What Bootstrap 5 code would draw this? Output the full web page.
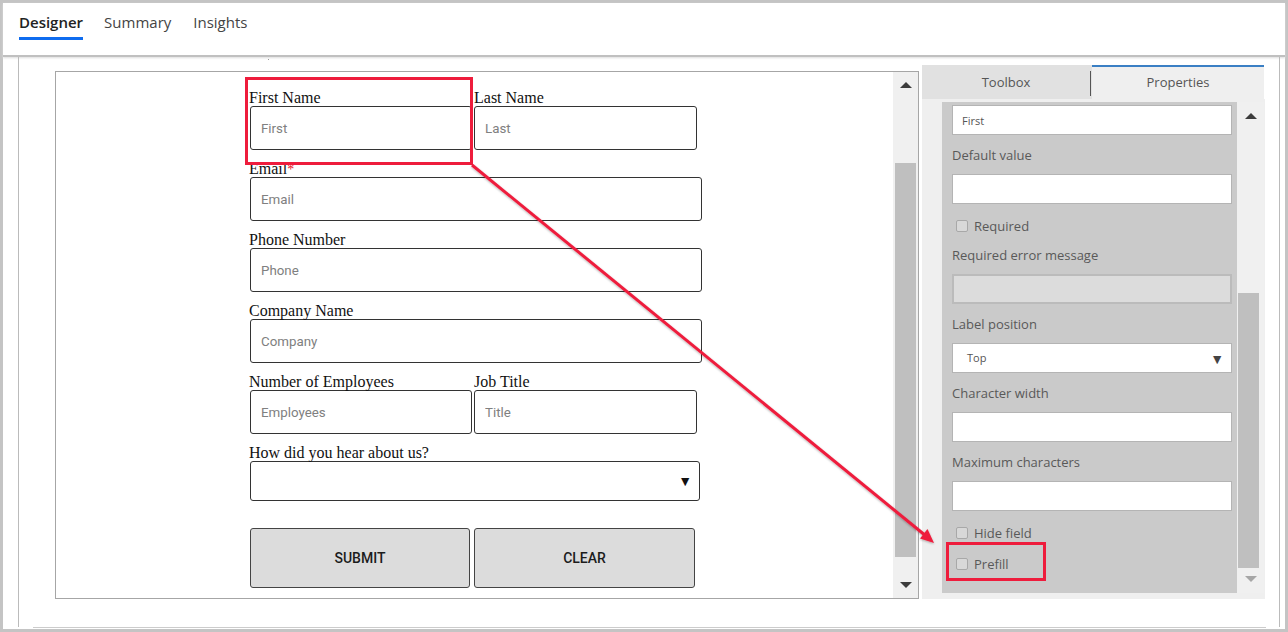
<!DOCTYPE html>
<html lang="en">
<head>
  <meta charset="UTF-8">
  <title>Form designer</title>
  <link rel="stylesheet" href="https://cdn.jsdelivr.net/npm/bootstrap@5.3.0/dist/css/bootstrap.min.css">
  <style>
    body { background: #fff; width: 1288px; height: 632px; overflow: hidden; font-family: "Open Sans", "Liberation Sans", sans-serif; }
    .frame { width: 1288px; height: 632px; border: 3px solid #c4c4c4; }
    .topbar { height: 54px; padding-left: 16px; border-bottom: 2px solid #c0c0c0; box-shadow: 0 1px 2px #ddd; }
    .topbar .nav-link { padding: 0 0 5px; margin-top: 10px; margin-right: 21px; height: 27px; color: #444; font-size: 15px; line-height: 19px; border-bottom: 3px solid transparent; }
    .topbar .nav-item:nth-child(2) .nav-link { margin-right: 22px; }
    .topbar .nav-link.active { color: #222; font-weight: 600; border-bottom-color: #0f6cef; }
    .workspace { height: 570px; margin: 0 5px 0 15px; border-left: 1px solid #bbb; border-right: 1px solid #bbb; padding: 8px 0 0 36px; gap: 3px; }
    .form-box { width: 864px; height: 528px; margin-top: 6px; border: 1px solid #a6a6a6; }
    .form-col { padding: 16px 0 0 194px; font-family: "Liberation Serif", serif; font-size: 16px; color: #111; }
    .f-row { gap: 2px; margin-bottom: 9px; }
    .f-label { display: block; height: 18px; line-height: 20px; margin: 0 0 0 -1px; }
    .f-row > div + div .f-label { margin-left: 0; }
    .f-label span { color: #e81123; font-size: 14px; }
    .form-col .form-control { height: 44px; padding: 0 10px; border: 1px solid #333; border-radius: 3px; font-family: Roboto, "Liberation Sans", sans-serif; font-size: 13.33px; }
    .form-col .form-control::placeholder { color: #808080; opacity: 1; }
    .w-half { width: 222px; }
    .w-half2 { width: 223px; }
    .w-full { width: 452px; }
    .fake-select { width: 450px; height: 40px; border: 1px solid #333; border-radius: 3px; padding-right: 7px; color: #111; font-size: 14px; }
    .btn-row { gap: 4px; margin-top: 27px; }
    .form-col .btn { height: 60px; border: 1px solid #444; border-radius: 3px; background: #dcdcdc; color: #1c1c1c; font-family: Roboto, "Liberation Sans", sans-serif; font-weight: 500; font-size: 14px; padding: 0; }
    .btn-submit { width: 220px; }
    .btn-clear { width: 221px; }
    .scroll-track { background: #f0f0f0; }
    .form-box .scroll-track { width: 25px; padding: 0 2px; }
    .sb-btn { flex: none; }
    .tri-up, .tri-down { width: 0; height: 0; border-left: 6px solid transparent; border-right: 6px solid transparent; }
    .tri-up { border-bottom: 6px solid #3c3c3c; }
    .tri-down { border-top: 6px solid #3c3c3c; }
    .tri-down.off { border-top-color: #a6a6a6; }
    .thumb { background: #bfbfbf; width: 21px; flex: none; }
    .side { width: 343px; height: 534px; color: #595959; font-size: 13px; }
    .side-tabs { height: 34px; }
    .side-tab { height: 34px; font-size: 13px; color: #555; }
    .side-tab.toolbox { width: 170px; background: #e1e1e1; padding: 2px 2px 0 0; }
    .side-tab.props { width: 172px; background: #efefef; border-top: 2px solid #3a7fc4; }
    .tab-sep { width: 1px; height: 25px; background: #555; position: absolute; right: 1px; top: 6px; }
    .side-body { height: 500px; background: #efefef; padding: 3px 0 6px 20px; }
    .props-form { width: 295px; background: #cacaca; padding: 3px 5px 0 10px; }
    .props-form .form-control { height: 30px; padding: 0 9px; border: 1px solid #b4b4b4; border-radius: 0; font-size: 11px; color: #555; background: #fff; }
    .props-form .form-control:disabled { background: #dcdcdc; border: 2px solid #bbb; }
    .p-label { display: block; height: 39px; padding-top: 10px; line-height: 20px; margin: 0; }
    .p-check { height: 31px; padding-top: 12px; line-height: 20px; gap: 6px; padding-left: 4px; }
    .p-check input { appearance: none; width: 12px; height: 12px; margin: 0; border: 1px solid #a8a8a8; border-radius: 2px; background: #d8d8d8; }
    .p-select { height: 30px; background: #fff; border: 1px solid #b4b4b4; padding: 0 7px 0 14px; font-size: 11px; color: #555; }
    .p-select .arrow { color: #444; font-size: 14px; }
    .side-body .scroll-track { width: 27px; padding-left: 1px; }
    .foot-line { height: 1px; width: 1233px; margin-left: 30px; background: #ccc; }
    .overlay { left: 0; top: 0; pointer-events: none; }
  </style>
</head>
<body>
<div class="position-relative">
<div class="frame">
  <div class="topbar bg-white">
    <ul class="nav">
      <li class="nav-item"><a class="nav-link active" href="#">Designer</a></li>
      <li class="nav-item"><a class="nav-link" href="#">Summary</a></li>
      <li class="nav-item"><a class="nav-link" href="#">Insights</a></li>
    </ul>
  </div>

  <div class="workspace d-flex align-items-start">
    <!-- form preview -->
    <div class="form-box d-flex justify-content-between">
      <form class="form-col">
        <div class="d-flex f-row">
          <div><label class="f-label">First Name</label><input class="form-control w-half" placeholder="First"></div>
          <div><label class="f-label">Last Name</label><input class="form-control w-half2" placeholder="Last"></div>
        </div>
        <div class="f-row">
          <label class="f-label">Email<span>*</span></label><input class="form-control w-full" placeholder="Email">
        </div>
        <div class="f-row">
          <label class="f-label">Phone Number</label><input class="form-control w-full" placeholder="Phone">
        </div>
        <div class="f-row">
          <label class="f-label">Company Name</label><input class="form-control w-full" placeholder="Company">
        </div>
        <div class="d-flex f-row">
          <div><label class="f-label">Number of Employees</label><input class="form-control w-half" placeholder="Employees"></div>
          <div><label class="f-label">Job Title</label><input class="form-control w-half2" placeholder="Title"></div>
        </div>
        <div>
          <label class="f-label">How did you hear about us?</label>
          <div class="fake-select d-flex align-items-center justify-content-end bg-white">&#9660;</div>
        </div>
        <div class="d-flex btn-row">
          <button type="button" class="btn btn-submit">SUBMIT</button>
          <button type="button" class="btn btn-clear">CLEAR</button>
        </div>
      </form>
      <div class="scroll-track d-flex flex-column">
        <div class="sb-btn d-flex align-items-center justify-content-center" style="height:26px"><div class="tri-up"></div></div>
        <div class="thumb" style="margin-top:65px;height:394px"></div>
        <div class="sb-btn d-flex align-items-center justify-content-center mt-auto" style="height:26px"><div class="tri-down"></div></div>
      </div>
    </div>

    <!-- properties panel -->
    <div class="side">
      <div class="side-tabs d-flex">
        <div class="side-tab toolbox position-relative d-flex align-items-center justify-content-center"><span>Toolbox</span><div class="tab-sep"></div></div>
        <div class="side-tab props d-flex align-items-center justify-content-center">Properties</div>
      </div>
      <div class="side-body d-flex">
        <div class="props-form">
          <input class="form-control" value="First">
          <label class="p-label">Default value</label>
          <input class="form-control">
          <div class="p-check d-flex align-items-center"><input type="checkbox"><span>Required</span></div>
          <label class="p-label">Required error message</label>
          <input class="form-control" disabled>
          <label class="p-label">Label position</label>
          <div class="p-select d-flex align-items-center justify-content-between"><span>Top</span><span class="arrow">&#9660;</span></div>
          <label class="p-label">Character width</label>
          <input class="form-control">
          <label class="p-label">Maximum characters</label>
          <input class="form-control">
          <div class="p-check d-flex align-items-center"><input type="checkbox"><span>Hide field</span></div>
          <div class="p-check d-flex align-items-center"><input type="checkbox"><span>Prefill</span></div>
        </div>
        <div class="scroll-track d-flex flex-column">
          <div class="sb-btn d-flex align-items-center justify-content-center" style="height:28px"><div class="tri-up"></div></div>
          <div class="thumb" style="margin-top:163px;height:275px"></div>
          <div class="sb-btn d-flex align-items-center justify-content-center" style="height:22px"><div class="tri-down off"></div></div>
        </div>
      </div>
    </div>
  </div>
  <div class="foot-line"></div>
</div>

<!-- callouts drawn over the screenshot -->
<svg class="overlay position-absolute" width="1288" height="632" viewBox="0 0 1288 632">
  <defs>
    <filter id="sh" x="-5%" y="-5%" width="110%" height="110%"><feDropShadow dx="0" dy="1" stdDeviation="1" flood-color="#000" flood-opacity="0.3"/></filter>
  </defs>
  <rect x="268" y="59" width="1" height="1" fill="#999"/>
  <g filter="url(#sh)">
    <line x1="472" y1="165" x2="926" y2="536" stroke="#ee1c3c" stroke-width="3"/>
    <polygon points="934,543 920,538.5 927.5,529" fill="#ee1c3c"/>
  </g>
  <rect x="246.5" y="78.5" width="225" height="85" fill="none" stroke="#ee1c3c" stroke-width="3"/>
  <rect x="947.5" y="543.5" width="97" height="36" fill="none" stroke="#ee1c3c" stroke-width="3"/>
</svg>
</div>
</body>
</html>
